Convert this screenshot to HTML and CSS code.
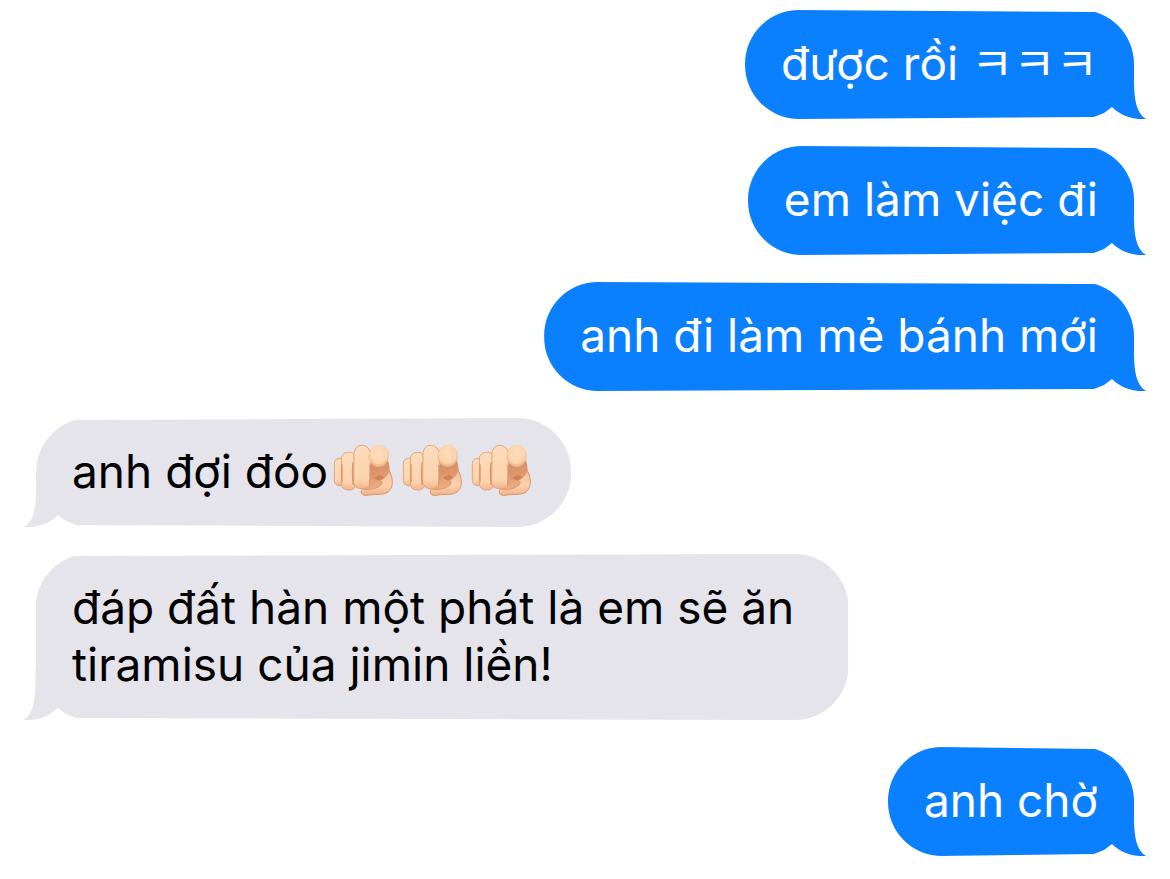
FILE: index.html
```
<!DOCTYPE html>
<html lang="vi">
<head>
    <meta charset="UTF-8">
    <meta name="viewport" content="width=device-width, initial-scale=1.0">
    <title>Tin nhắn</title>
    <link rel="stylesheet" href="styles.css">
</head>
<body>
    <svg class="sprite" aria-hidden="true">
        <defs>
            <linearGradient id="skin" x1="0" y1="0" x2="0" y2="1">
                <stop offset="0" stop-color="#fddcbc"/>
                <stop offset="0.8" stop-color="#fcd3ae"/>
                <stop offset="1" stop-color="#f0b48c"/>
            </linearGradient>
            <radialGradient id="tip" cx="0.5" cy="0.42" r="0.6">
                <stop offset="0" stop-color="#ffdcb8"/>
                <stop offset="0.65" stop-color="#fdd5ae"/>
                <stop offset="1" stop-color="#e5a57c"/>
            </radialGradient>
            <linearGradient id="palm" x1="0.3" y1="0" x2="0.5" y2="1">
                <stop offset="0" stop-color="#d08862"/>
                <stop offset="0.45" stop-color="#e0966c"/>
                <stop offset="1" stop-color="#f3bb93"/>
            </linearGradient>
            <linearGradient id="thumb" x1="0" y1="0" x2="0" y2="1">
                <stop offset="0" stop-color="#f2bd96"/>
                <stop offset="0.6" stop-color="#fcd2ad"/>
                <stop offset="1" stop-color="#f0b18a"/>
            </linearGradient>
        </defs>
        <symbol id="tail" viewBox="0 0 44 54">
            <path d="M10 0H32V14C32 34 34 48 44 54C30 55 18 50 10 42Z"/>
        </symbol>
        <symbol id="point" viewBox="24 27 180 156">
            <path d="M120 70H186C192 84 194 96 194 108C206 132 204 158 188 171C172 182 148 176 126 181C108 183 107 168 112 158Z" fill="url(#palm)"/>
            <path d="M148 128C158 118 172 118 180 128C174 138 158 140 148 128Z" fill="#c8744c" opacity="0.7"/>
            <path d="M191 104C207 132 205 158 189 171C173 182 148 176 126 181C107 183 106 167 113 161C130 166 150 162 163 154C172 148 174 142 166 136C178 128 190 122 191 104Z" fill="url(#thumb)" stroke="#dc966b" stroke-width="3"/>
            <rect x="28" y="70" width="34" height="82" rx="15" fill="url(#skin)" stroke="#e3a57c" stroke-width="3"/>
            <rect x="49" y="52" width="44" height="113" rx="19" fill="url(#skin)" stroke="#e3a57c" stroke-width="3"/>
            <path d="M87 58C87 42 96 31 110 31C126 31 136 43 136 59V140C136 155 127 161 112 161C96 161 86 154 86 140Z" fill="url(#skin)" stroke="#e3a57c" stroke-width="3"/>
            <path d="M51 90V140M84 84C81 98 83 125 84 148M134 92C137 105 136 126 134 147" fill="none" stroke="#d89369" stroke-width="4" stroke-linecap="round"/>
            <ellipse cx="161" cy="63" rx="31" ry="33" fill="url(#tip)"/>
        </symbol>
    </svg>

    <main class="chat">
        <div class="bubble sent">
            <span class="shape"><svg class="tail"><use href="#tail"/></svg></span>
            <p>được rồi ㅋㅋㅋ</p>
        </div>
        <div class="bubble sent">
            <span class="shape"><svg class="tail"><use href="#tail"/></svg></span>
            <p>em làm việc đi</p>
        </div>
        <div class="bubble sent">
            <span class="shape"><svg class="tail"><use href="#tail"/></svg></span>
            <p>anh đi làm mẻ bánh mới</p>
        </div>
        <div class="bubble received">
            <span class="shape"><svg class="tail"><use href="#tail"/></svg></span>
            <p>anh đợi đóo<svg class="emoji" aria-hidden="true"><use href="#point"/></svg><svg class="emoji" aria-hidden="true"><use href="#point"/></svg><svg class="emoji" aria-hidden="true"><use href="#point"/></svg></p>
        </div>
        <div class="bubble received">
            <span class="shape"><svg class="tail"><use href="#tail"/></svg></span>
            <p>đáp đất hàn một phát là em sẽ ăn tiramisu của jimin liền!</p>
        </div>
        <div class="bubble sent">
            <span class="shape"><svg class="tail"><use href="#tail"/></svg></span>
            <p>anh chờ</p>
        </div>
    </main>
</body>
</html>
```

FILE: styles.css
```
body {
    margin: 0;
    background: #fff;
    font-family: Inter, "Noto Sans CJK KR", sans-serif;
    font-size: 46px;
    line-height: 57px;
}

.sprite {
    position: absolute;
    width: 0;
    height: 0;
}

.chat {
    display: flex;
    flex-direction: column;
    gap: 27px;
    padding: 10px 36px 23px;
}

.bubble {
    position: relative;
    z-index: 0;
    box-sizing: border-box;
    max-width: 74%;
    padding: 25px 36px 27px;
}

.bubble p {
    margin: 0;
}

.sent {
    align-self: flex-end;
    color: #fff;
    --fill: #0b80ff;
}

.received {
    align-self: flex-start;
    color: #000;
    --fill: #e5e4eb;
}

/* bubble background, drawn with the tail on the right */
.shape {
    position: absolute;
    inset: 0;
    z-index: -1;
}

.shape::before {
    content: "";
    position: absolute;
    inset: 0;
    border-radius: 54px;
    background: var(--fill);
    /* edges lean in slightly towards the tail */
    clip-path: polygon(
        0 0, 50px 0, calc(100% - 40px) 2px, 100% 2px,
        100% calc(100% - 12px), calc(100% - 22px) calc(100% - 12px),
        calc(100% - 30px) calc(100% - 6px), calc(100% - 40px) calc(100% - 2px),
        50px 100%, 0 100%
    );
}

.received .shape {
    transform: scaleX(-1);
}

.tail {
    position: absolute;
    right: -12px;
    bottom: 0;
    width: 44px;
    height: 54px;
    fill: var(--fill);
}

.emoji {
    width: 60px;
    height: 52px;
    margin: 0 4px 0 5px;
    vertical-align: -8px;
}
```
